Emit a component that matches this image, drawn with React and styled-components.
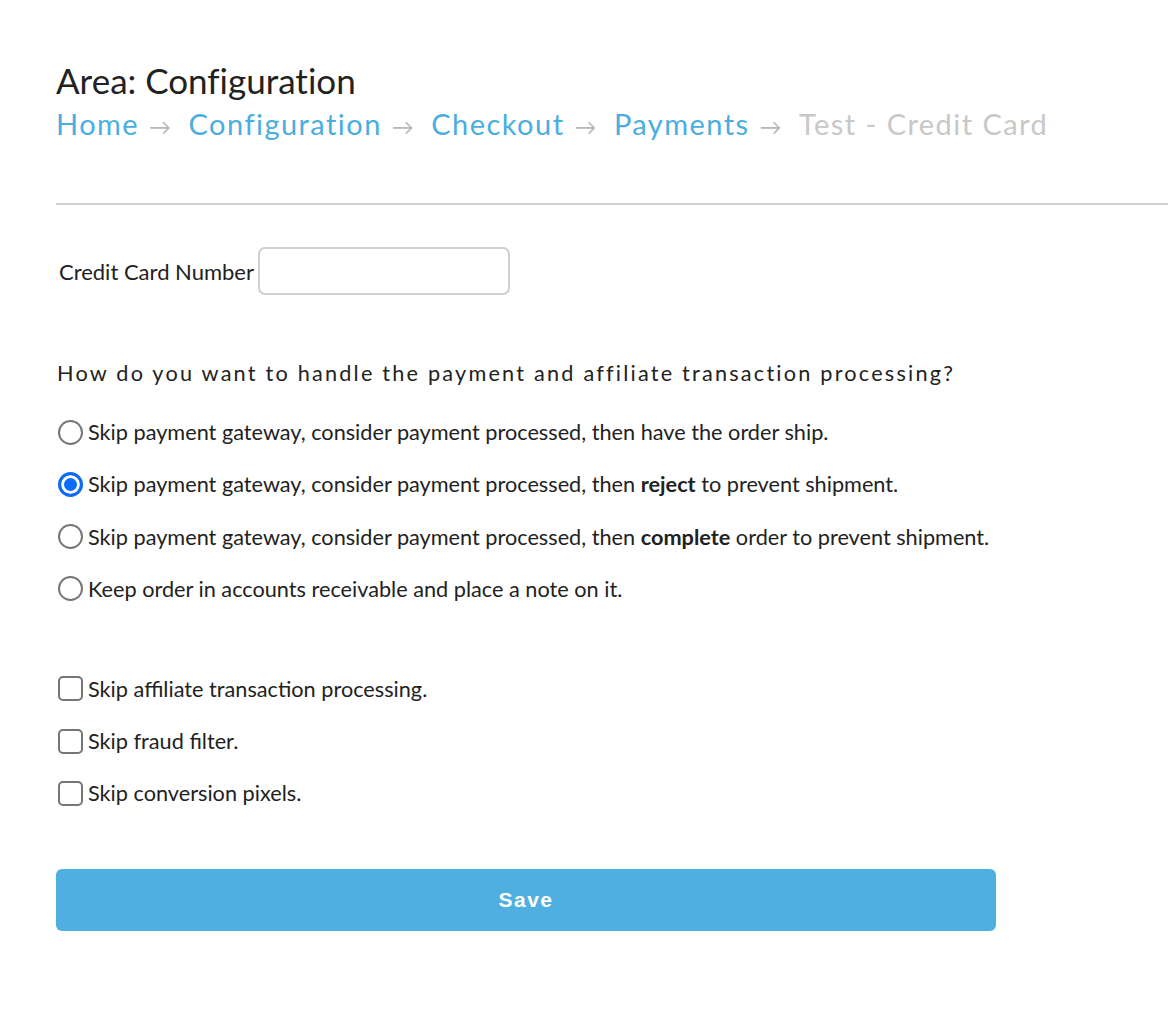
import styled, { createGlobalStyle } from "styled-components";

const GlobalStyle = createGlobalStyle`
  body {
    margin: 0;
    background: #fff;
    font-family: Lato, "Open Sans", sans-serif;
    color: #222;
  }
`;

const Page = styled.div`
  padding: 60px 0 80px 56px;
`;

const Title = styled.h1`
  margin: 0;
  font-size: 35px;
  font-weight: 400;
  line-height: 40px;
  color: #222;
  font-variant-ligatures: none;
`;

const Crumbs = styled.nav`
  display: flex;
  align-items: baseline;
  margin-top: 6px;
  font-size: 29px;
  letter-spacing: 1.45px;
  line-height: 36px;
  font-variant-ligatures: none;
`;

const Crumb = styled.span`
  color: ${(p) => (p.$current ? "#c8c8c8" : "#4aaee0")};
`;

const Arrow = styled.span`
  color: #b8b8b8;
  font-size: 22px;
  margin: 0 16px 0 10px;
`;

const Divider = styled.hr`
  margin: 58px 0 0;
  border: 0;
  border-top: 2px solid #d0d0d0;
`;

const Field = styled.div`
  display: flex;
  align-items: center;
  margin-top: 42px;
  font-size: 22px;
  padding-left: 3px;
`;

const TextInput = styled.input`
  width: 252px;
  height: 48px;
  box-sizing: border-box;
  margin-left: 4px;
  border: 2px solid #cfcfcf;
  border-radius: 7px;
  font: inherit;
  padding: 0 10px;
  outline: none;
`;

const Question = styled.p`
  margin: 64px 0 0;
  padding-left: 1px;
  font-size: 21.7px;
  line-height: 28px;
  letter-spacing: 2.2px;
  color: #222;
`;

const OptionList = styled.div`
  display: flex;
  flex-direction: column;
  gap: 24.3px;
  margin-top: ${(p) => p.$top}px;
  padding-left: 2px;
`;

const Option = styled.label`
  display: flex;
  align-items: center;
  font-size: 21.7px;
  line-height: 28px;
  color: #222;
  b {
    font-weight: 700;
  }
`;

const Radio = styled.input.attrs({ type: "radio" })`
  appearance: none;
  width: 25px;
  height: 25px;
  margin: 0 5px 0 0;
  box-sizing: border-box;
  border-radius: 50%;
  border: 2px solid #767676;
  background: #fff;
  flex: none;
  &:checked {
    border: 3px solid #0b6cf7;
    box-shadow: inset 0 0 0 3px #fff;
    background: #0b6cf7;
  }
`;

const Check = styled.input.attrs({ type: "checkbox" })`
  appearance: none;
  width: 25px;
  height: 25px;
  margin: 0 5px 0 0;
  box-sizing: border-box;
  border-radius: 5px;
  border: 2px solid #767676;
  background: #fff;
  flex: none;
`;

const SaveButton = styled.button`
  display: block;
  width: 940px;
  height: 62px;
  margin-top: 62px;
  border: 0;
  border-radius: 6px;
  background: #4eafe0;
  color: #fff;
  font-family: "Liberation Sans", Arial, sans-serif;
  font-weight: 700;
  font-size: 21px;
  letter-spacing: 1.5px;
`;

const crumbs = ["Home", "Configuration", "Checkout", "Payments"];

const App = () => (
  <Page>
    <GlobalStyle />
    <Title>Area: Configuration</Title>
    <Crumbs>
      {crumbs.map((c) => (
        <span key={c}>
          <Crumb>{c}</Crumb>
          <Arrow>→</Arrow>
        </span>
      ))}
      <Crumb $current>Test - Credit Card</Crumb>
    </Crumbs>
    <Divider />

    <Field>
      Credit Card Number
      <TextInput />
    </Field>

    <Question>How do you want to handle the payment and affiliate transaction processing?</Question>

    <OptionList $top={31}>
      <Option>
        <Radio name="handle" />
        Skip payment gateway, consider payment processed, then have the order ship.
      </Option>
      <Option>
        <Radio name="handle" defaultChecked />
        Skip payment gateway, consider payment processed, then&nbsp;<b>reject</b>&nbsp;to prevent shipment.
      </Option>
      <Option>
        <Radio name="handle" />
        Skip payment gateway, consider payment processed, then&nbsp;<b>complete</b>&nbsp;order to prevent shipment.
      </Option>
      <Option>
        <Radio name="handle" />
        Keep order in accounts receivable and place a note on it.
      </Option>
    </OptionList>

    <OptionList $top={72}>
      <Option>
        <Check />
        Skip affiliate transaction processing.
      </Option>
      <Option>
        <Check />
        Skip fraud filter.
      </Option>
      <Option>
        <Check />
        Skip conversion pixels.
      </Option>
    </OptionList>

    <SaveButton>Save</SaveButton>
  </Page>
);

export default App;
